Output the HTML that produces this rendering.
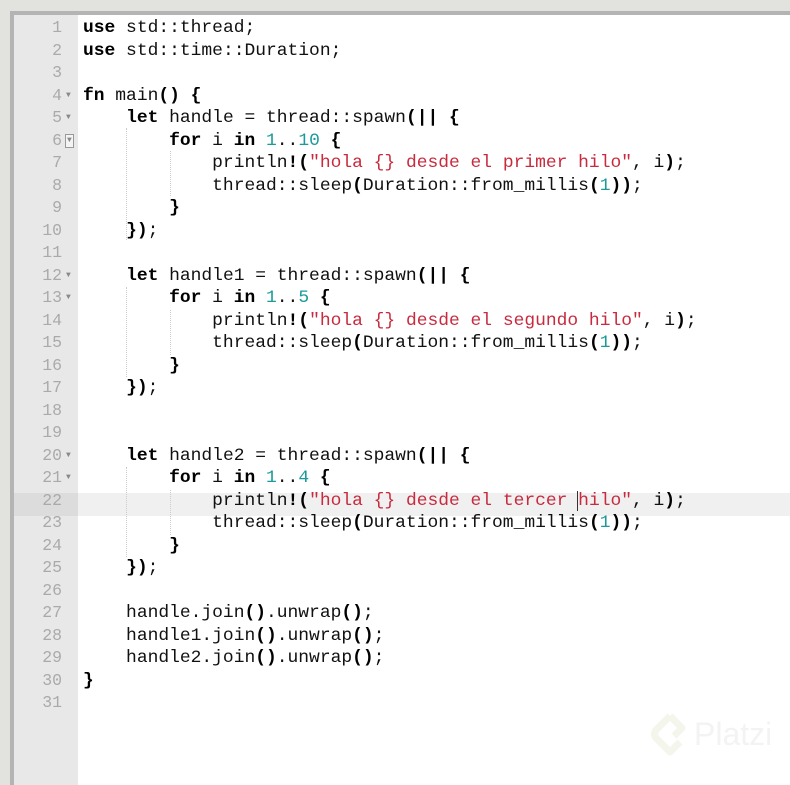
<!DOCTYPE html><html><head><style>
body{margin:0;width:790px;height:765px;background:#e2e2de;overflow:hidden;position:relative;font-family:"Liberation Mono",monospace;}
#ed{position:absolute;left:10px;top:11px;width:800px;height:770px;border-left:4px solid #b4b4b4;border-top:4px solid #b4b4b4;background:#fff;}
#gut{position:absolute;left:0;top:0;width:64px;height:100%;background:#e8e8e8;}
.l{position:absolute;left:0;height:22.5px;line-height:22.5px;font-size:17.95px;white-space:pre;width:800px}
.n{position:absolute;left:0;width:48px;text-align:right;color:#aaa;font-size:16.5px}
.c{position:absolute;left:69px;color:#111}
.k{font-weight:bold;color:#000}
.d{color:#1a9a9a}.s{color:#c82a3e}
.a{position:absolute;left:52px;top:0;font-size:8px;color:#888}
.g{position:absolute;width:0;border-left:1px dotted #ccc}
</style></head><body><div id="ed"><div id="gut"></div>
<div class="l" style="top:478px;left:0;background:#f0f0f0;width:800px"></div>
<div class="l" style="top:478px;left:0;background:#dcdcdc;width:64px"></div>
<div class="g" style="left:112px;top:113px;height:112px"></div>
<div class="g" style="left:112px;top:272px;height:90px"></div>
<div class="g" style="left:112px;top:452px;height:90px"></div>
<div class="g" style="left:156px;top:136px;height:45px"></div>
<div class="g" style="left:156px;top:295px;height:45px"></div>
<div class="g" style="left:156px;top:475px;height:45px"></div>
<div class="l" style="top:2px"><span class="n">1</span><span class="c"><span class="k">use</span> std::thread;</span></div>
<div class="l" style="top:24.5px"><span class="n">2</span><span class="c"><span class="k">use</span> std::time::Duration;</span></div>
<div class="l" style="top:47px"><span class="n">3</span></div>
<div class="l" style="top:69.5px"><span class="n">4</span><span class="a">▼</span><span class="c"><span class="k">fn</span> main<span class="k">()</span> <span class="k">{</span></span></div>
<div class="l" style="top:92px"><span class="n">5</span><span class="a">▼</span><span class="c">    <span class="k">let</span> handle = thread::spawn<span class="k">(||</span> <span class="k">{</span></span></div>
<div class="l" style="top:114.5px"><span class="n">6</span><span class="a" style="border:1px solid #999;line-height:12px;top:4px;left:51px;padding:0 1px;background:#f4f4f4">▼</span><span class="c">        <span class="k">for</span> i <span class="k">in</span> <span class="d">1</span>..<span class="d">10</span> <span class="k">{</span></span></div>
<div class="l" style="top:137px"><span class="n">7</span><span class="c">            println<span class="k">!(</span><span class="s">"hola {} desde el primer hilo"</span>, i<span class="k">)</span>;</span></div>
<div class="l" style="top:159.5px"><span class="n">8</span><span class="c">            thread::sleep<span class="k">(</span>Duration::from_millis<span class="k">(</span><span class="d">1</span><span class="k">))</span>;</span></div>
<div class="l" style="top:182px"><span class="n">9</span><span class="c">        <span class="k">}</span></span></div>
<div class="l" style="top:204.5px"><span class="n">10</span><span class="c">    <span class="k">})</span>;</span></div>
<div class="l" style="top:227px"><span class="n">11</span></div>
<div class="l" style="top:249.5px"><span class="n">12</span><span class="a">▼</span><span class="c">    <span class="k">let</span> handle1 = thread::spawn<span class="k">(||</span> <span class="k">{</span></span></div>
<div class="l" style="top:272px"><span class="n">13</span><span class="a">▼</span><span class="c">        <span class="k">for</span> i <span class="k">in</span> <span class="d">1</span>..<span class="d">5</span> <span class="k">{</span></span></div>
<div class="l" style="top:294.5px"><span class="n">14</span><span class="c">            println<span class="k">!(</span><span class="s">"hola {} desde el segundo hilo"</span>, i<span class="k">)</span>;</span></div>
<div class="l" style="top:317px"><span class="n">15</span><span class="c">            thread::sleep<span class="k">(</span>Duration::from_millis<span class="k">(</span><span class="d">1</span><span class="k">))</span>;</span></div>
<div class="l" style="top:339.5px"><span class="n">16</span><span class="c">        <span class="k">}</span></span></div>
<div class="l" style="top:362px"><span class="n">17</span><span class="c">    <span class="k">})</span>;</span></div>
<div class="l" style="top:384.5px"><span class="n">18</span></div>
<div class="l" style="top:407px"><span class="n">19</span></div>
<div class="l" style="top:429.5px"><span class="n">20</span><span class="a">▼</span><span class="c">    <span class="k">let</span> handle2 = thread::spawn<span class="k">(||</span> <span class="k">{</span></span></div>
<div class="l" style="top:452px"><span class="n">21</span><span class="a">▼</span><span class="c">        <span class="k">for</span> i <span class="k">in</span> <span class="d">1</span>..<span class="d">4</span> <span class="k">{</span></span></div>
<div class="l" style="top:474.5px"><span class="n">22</span><span class="c">            println<span class="k">!(</span><span class="s">"hola {} desde el tercer <span style="border-left:1px solid #333;margin-left:-1px">h</span>ilo"</span>, i<span class="k">)</span>;</span></div>
<div class="l" style="top:497px"><span class="n">23</span><span class="c">            thread::sleep<span class="k">(</span>Duration::from_millis<span class="k">(</span><span class="d">1</span><span class="k">))</span>;</span></div>
<div class="l" style="top:519.5px"><span class="n">24</span><span class="c">        <span class="k">}</span></span></div>
<div class="l" style="top:542px"><span class="n">25</span><span class="c">    <span class="k">})</span>;</span></div>
<div class="l" style="top:564.5px"><span class="n">26</span></div>
<div class="l" style="top:587px"><span class="n">27</span><span class="c">    handle.join<span class="k">()</span>.unwrap<span class="k">()</span>;</span></div>
<div class="l" style="top:609.5px"><span class="n">28</span><span class="c">    handle1.join<span class="k">()</span>.unwrap<span class="k">()</span>;</span></div>
<div class="l" style="top:632px"><span class="n">29</span><span class="c">    handle2.join<span class="k">()</span>.unwrap<span class="k">()</span>;</span></div>
<div class="l" style="top:654.5px"><span class="n">30</span><span class="c"><span class="k">}</span></span></div>
<div class="l" style="top:677px"><span class="n">31</span></div>
</div>
<svg style="position:absolute;left:650px;top:712px" width="40" height="46"><path d="M20 4 L6 18 Q3 22 6 26 L20 40 L30 30" fill="none" stroke="#f4f6ec" stroke-width="7" stroke-linejoin="round"/><path d="M20 4 L32 16 L24 24" fill="none" stroke="#f4f6ec" stroke-width="7" stroke-linejoin="round"/></svg>
<div style="position:absolute;left:694px;top:716px;font-family:'Liberation Sans',sans-serif;font-size:32px;color:#f3f3f3">Platzi</div>
</body></html>
